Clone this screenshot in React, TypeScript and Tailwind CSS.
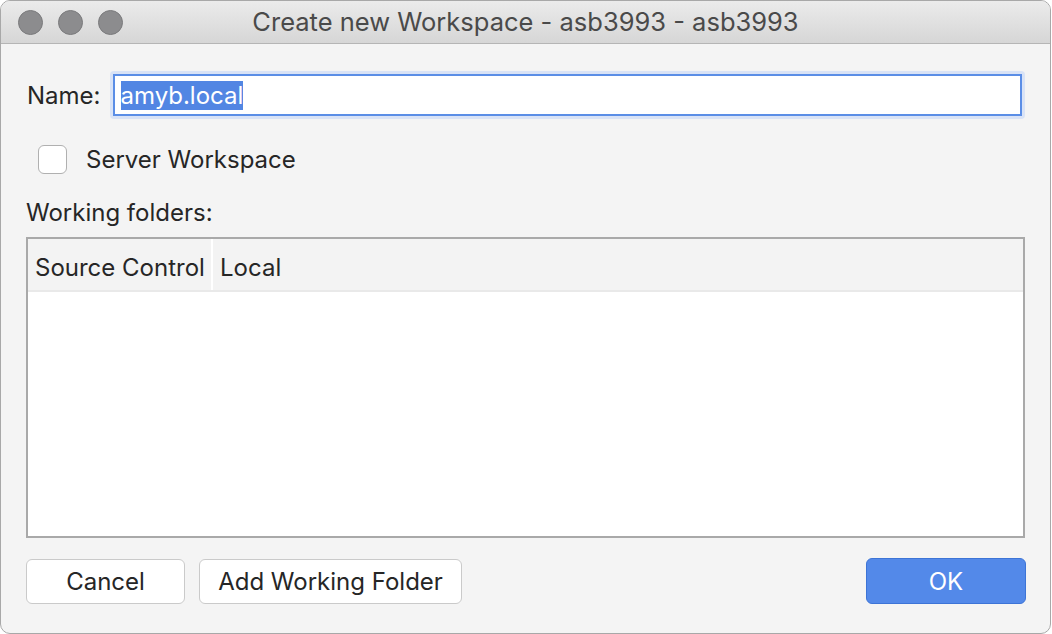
export default function App() {
  return (
    <div className="w-[1052px] h-[634px] bg-white overflow-hidden" style={{ fontFamily: "Inter, 'Noto Sans', sans-serif" }}>
      <div className="w-[1051px] h-[634px] flex flex-col border border-[#a8a8a8] rounded-[10px] overflow-hidden bg-[#f4f4f4]">
        {/* Title bar */}
        <div className="h-[43px] shrink-0 flex items-center relative bg-gradient-to-b from-[#ebebeb] to-[#d6d6d6] border-b border-[#b5b5b5]">
          <div className="flex gap-[15px] pl-[17px]">
            <span className="w-[25px] h-[25px] rounded-full bg-[#8c8c8e] border border-[#7a7a7c]" />
            <span className="w-[25px] h-[25px] rounded-full bg-[#8c8c8e] border border-[#7a7a7c]" />
            <span className="w-[25px] h-[25px] rounded-full bg-[#8c8c8e] border border-[#7a7a7c]" />
          </div>
          <div className="absolute inset-0 flex items-center justify-center text-[25.5px] text-[#4a4a4a] pointer-events-none">
            Create new Workspace - asb3993 - asb3993
          </div>
        </div>

        {/* Body */}
        <div className="flex-1 flex flex-col px-[25px] text-[24px] leading-[29px] text-[#262626]">
          <div className="flex items-center mt-[27px] gap-[9px]">
            <span className="pl-[1px]">Name:</span>
            <div className="flex-1 h-[48px] rounded-[4px] bg-[#d9e3f6] p-[3px]">
              <div className="h-full border-2 border-[#5b8ee6] bg-white flex items-center px-[6px]">
                <span className="bg-[#5286e3] text-white leading-[29px]">amyb.local</span>
              </div>
            </div>
          </div>

          <label className="flex items-center mt-[26px] ml-[12px] gap-[19px]">
            <span className="w-[29px] h-[29px] rounded-[6px] border border-[#b0b0b0] bg-white" />
            <span>Server Workspace</span>
          </label>

          <div className="mt-[24px]">Working folders:</div>

          <div className="mt-[10px] h-[301px] border-2 border-[#a9a9a9] bg-white flex flex-col">
            <div className="h-[53px] shrink-0 flex bg-[#f3f3f3] border-b-2 border-[#e9e9e9]">
              <div className="w-[185px] flex items-center pl-[7px] pt-[6px] border-r-2 border-white">Source Control</div>
              <div className="flex items-center pl-[7px] pt-[6px]">Local</div>
            </div>
            <div className="flex-1" />
          </div>

          <div className="flex mt-[21px] gap-[14px]">
            <button className="w-[159px] h-[45px] rounded-[6px] border border-[#cacaca] bg-white text-[24px] text-[#262626]">Cancel</button>
            <button className="w-[263px] h-[45px] rounded-[6px] border border-[#cacaca] bg-white text-[24px] text-[#262626]">Add Working Folder</button>
            <div className="flex-1" />
            <button className="w-[160px] h-[46px] rounded-[6px] border border-[#3d74d6] bg-[#5389e9] text-[24px] text-white mr-[-1px] -mt-[1px]">OK</button>
          </div>
        </div>
      </div>
    </div>
  );
}
